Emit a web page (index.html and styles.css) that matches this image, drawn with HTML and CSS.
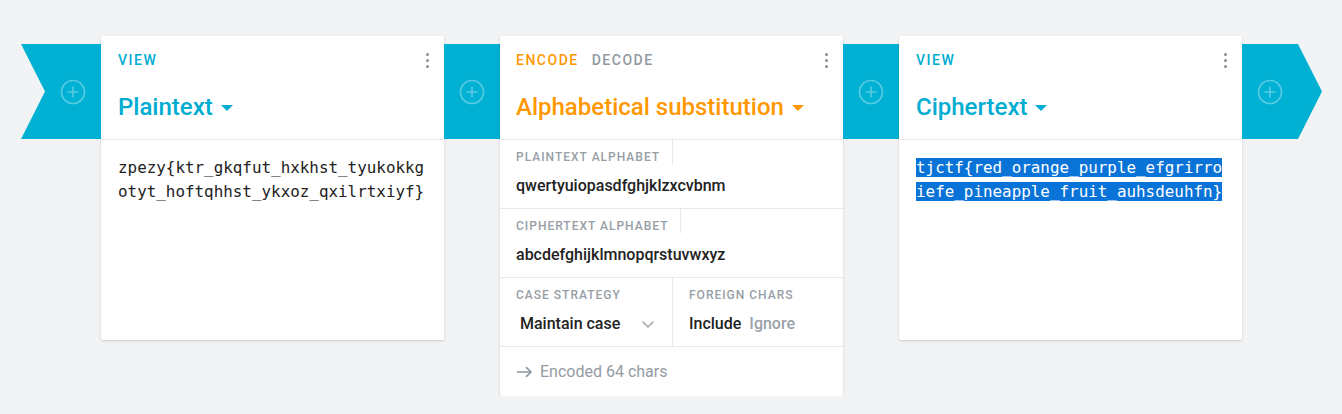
FILE: index.html
```html
<!DOCTYPE html>
<html>
<head>
<meta charset="utf-8">
<link rel="stylesheet" href="styles.css">
</head>
<body>
<div class="pipeline">
  <div class="band band-start">
    <svg class="plus" width="26" height="26" viewBox="0 0 26 26"><circle cx="13" cy="13" r="11.5" fill="none" stroke="rgba(255,255,255,0.35)" stroke-width="1.6"/><path d="M13 7.5v11M7.5 13h11" stroke="rgba(255,255,255,0.35)" stroke-width="1.6"/></svg>
  </div>

  <div class="card">
    <div class="card-head">
      <div class="head-top">
        <span class="tab tab-view">VIEW</span>
        <span class="kebab"><i></i><i></i><i></i></span>
      </div>
      <div class="title title-view">Plaintext<span class="caret"></span></div>
    </div>
    <div class="card-body mono">zpezy{ktr_gkqfut_hxkhst_tyukokkgotyt_hoftqhhst_ykxoz_qxilrtxiyf}</div>
  </div>

  <div class="band band-mid">
    <svg class="plus" width="26" height="26" viewBox="0 0 26 26"><circle cx="13" cy="13" r="11.5" fill="none" stroke="rgba(255,255,255,0.35)" stroke-width="1.6"/><path d="M13 7.5v11M7.5 13h11" stroke="rgba(255,255,255,0.35)" stroke-width="1.6"/></svg>
  </div>

  <div class="card card-enc">
    <div class="card-head">
      <div class="head-top">
        <span class="tabs"><span class="tab tab-enc">ENCODE</span><span class="tab tab-off">DECODE</span></span>
        <span class="kebab"><i></i><i></i><i></i></span>
      </div>
      <div class="title title-enc">Alphabetical substitution<span class="caret caret-enc"></span></div>
    </div>
    <div class="field">
      <div class="label"><span>PLAINTEXT ALPHABET</span></div>
      <div class="value">qwertyuiopasdfghjklzxcvbnm</div>
    </div>
    <div class="field">
      <div class="label"><span>CIPHERTEXT ALPHABET</span></div>
      <div class="value">abcdefghijklmnopqrstuvwxyz</div>
    </div>
    <div class="split">
      <div class="col col-left">
        <div class="label plain">CASE STRATEGY</div>
        <div class="value select">Maintain case
          <svg class="chev" width="14" height="9" viewBox="0 0 14 9"><path d="M1.5 1.5l5.5 5.5 5.5-5.5" fill="none" stroke="#a3a8ae" stroke-width="1.5"/></svg>
        </div>
      </div>
      <div class="col col-right">
        <div class="label plain">FOREIGN CHARS</div>
        <div class="value"><span>Include</span><span class="off">Ignore</span></div>
      </div>
    </div>
    <div class="foot">
      <svg width="17" height="12" viewBox="0 0 17 12"><path d="M1 6h14M10 1.2l5 4.8-5 4.8" fill="none" stroke="#8e959c" stroke-width="1.6"/></svg>
      <span>Encoded 64 chars</span>
    </div>
  </div>

  <div class="band band-mid">
    <svg class="plus" width="26" height="26" viewBox="0 0 26 26"><circle cx="13" cy="13" r="11.5" fill="none" stroke="rgba(255,255,255,0.35)" stroke-width="1.6"/><path d="M13 7.5v11M7.5 13h11" stroke="rgba(255,255,255,0.35)" stroke-width="1.6"/></svg>
  </div>

  <div class="card">
    <div class="card-head">
      <div class="head-top">
        <span class="tab tab-view">VIEW</span>
        <span class="kebab"><i></i><i></i><i></i></span>
      </div>
      <div class="title title-view">Ciphertext<span class="caret"></span></div>
    </div>
    <div class="card-body mono"><span class="sel">tjctf{red_orange_purple_efgrirroiefe_pineapple_fruit_auhsdeuhfn}</span></div>
  </div>

  <div class="band band-end">
    <svg class="plus" width="26" height="26" viewBox="0 0 26 26"><circle cx="13" cy="13" r="11.5" fill="none" stroke="rgba(255,255,255,0.35)" stroke-width="1.6"/><path d="M13 7.5v11M7.5 13h11" stroke="rgba(255,255,255,0.35)" stroke-width="1.6"/></svg>
  </div>
</div>
</body>
</html>
```

FILE: styles.css
```css
* { box-sizing: border-box; }
html, body {
  margin: 0;
  padding: 0;
  background: #f2f3f5;
  font-family: Roboto, "Liberation Sans", sans-serif;
}
.pipeline {
  display: flex;
  align-items: flex-start;
  padding: 36px 0 0 21px;
}
.band {
  flex: none;
  height: 95px;
  margin-top: 8px;
  background: #00b1d4;
  display: flex;
  align-items: center;
  justify-content: center;
}
.band-start {
  width: 80px;
  padding-left: 24px;
  clip-path: polygon(0 0, 100% 0, 100% 100%, 0 100%, 24px 50%);
}
.band-mid { width: 56px; }
.band-end {
  width: 80px;
  padding-right: 24px;
  clip-path: polygon(0 0, 56px 0, 100% 50%, 56px 100%, 0 100%);
}
.plus { display: block; }

.card {
  flex: none;
  width: 343px;
  min-height: 304px;
  background: #fff;
  border-radius: 2px;
  box-shadow: 0 1px 3px rgba(0,0,0,0.12), 0 1px 2px rgba(0,0,0,0.06);
}
.card-enc { min-height: 360px; }
.card-head {
  padding: 16px 17px 17px;
  border-bottom: 1px solid #e6e8eb;
}
.card-enc .card-head { padding-left: 16px; }
.head-top {
  display: flex;
  justify-content: space-between;
  align-items: center;
  height: 16px;
}
.tabs { display: flex; gap: 13px; }
.tab {
  font-size: 14px;
  font-weight: 500;
  letter-spacing: 1.5px;
  line-height: 16px;
}
.tab-view { color: #00acd1; }
.tab-enc { color: #ff9800; }
.tab-off { color: #8f99a3; }
.kebab {
  display: flex;
  flex-direction: column;
  gap: 3px;
  margin-right: -2px;
}
.kebab i {
  display: block;
  width: 3px;
  height: 3px;
  border-radius: 50%;
  background: #8b9096;
}
.title {
  margin-top: 24px;
  font-size: 24px;
  font-weight: 500;
  line-height: 30px;
  display: flex;
  align-items: center;
}
.title-view { color: #00acd1; }
.title-enc { color: #ff9800; }
.caret {
  width: 0;
  height: 0;
  margin-left: 8px;
  margin-top: 1px;
  border-left: 6px solid transparent;
  border-right: 6px solid transparent;
  border-top: 6px solid #00acd1;
}
.caret-enc { border-top-color: #ff9800; }

.card-body {
  padding: 16px 17px;
}
.mono {
  font-family: "DejaVu Sans Mono", "Liberation Mono", monospace;
  font-size: 15.9px;
  line-height: 24px;
  color: #222;
  word-break: break-all;
}
.sel {
  background: #0a73d8;
  color: #fff;
}

.field {
  padding: 0 16px 12px;
  border-bottom: 1px solid #e6e8eb;
}
.label {
  display: flex;
}
.label span, .label.plain {
  font-size: 12px;
  font-weight: 500;
  letter-spacing: 1px;
  color: #979ea6;
  line-height: 14px;
  padding-top: 10px;
  height: 24px;
}
.label span {
  padding-right: 12px;
  border-right: 1px solid #e6e8eb;
}
.value {
  margin-top: 12px;
  font-size: 16px;
  font-weight: 500;
  line-height: 20px;
  color: #222;
}
.split {
  display: flex;
  border-bottom: 1px solid #e6e8eb;
}
.col { padding: 0 16px 12px; }
.col-left {
  width: 173px;
  border-right: 1px solid #e6e8eb;
}
.col-right { flex: 1; }
.select {
  display: flex;
  align-items: center;
  justify-content: space-between;
  padding-left: 4px;
  padding-right: 1px;
}
.select .chev { margin-top: 1px; }
.col-right .value { display: flex; gap: 8px; }
.off { color: #9aa1a8; }
.foot {
  display: flex;
  align-items: center;
  gap: 7px;
  padding: 14px 16px;
  font-size: 16px;
  line-height: 21px;
  color: #949ba3;
}
```
